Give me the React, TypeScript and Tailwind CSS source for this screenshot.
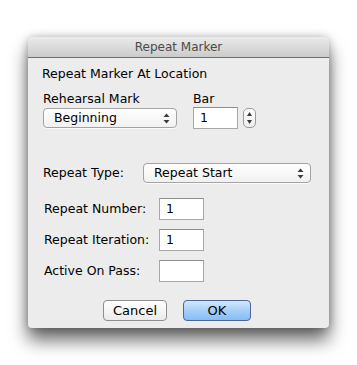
const font = "font-['DejaVu_Sans','Liberation_Sans',Arial,sans-serif]";

function Arrows() {
  return (
    <svg width="7" height="11" viewBox="0 0 7 11" className="shrink-0">
      <path d="M3.5 0.5 L6.5 4 L0.5 4 Z" fill="#3a3a3a" />
      <path d="M3.5 10.5 L6.5 7 L0.5 7 Z" fill="#3a3a3a" />
    </svg>
  );
}

function Popup({ label, width }: { label: string; width: string }) {
  return (
    <div
      className={`${width} h-[20px] flex items-center justify-between pl-[10px] pr-[6px] rounded-[4px] border border-[#a3a3a3] bg-gradient-to-b from-white to-[#f1f1f1] shadow-[0_1px_0_rgba(255,255,255,0.8)] text-[12.5px] text-black`}
    >
      <span>{label}</span>
      <Arrows />
    </div>
  );
}

function Field({ value }: { value: string }) {
  return (
    <div className="w-[45px] h-[22px] bg-white border border-[#a8a8a8] border-t-[#8c8c8c] flex items-center pl-[6px] text-[12.5px] text-black">
      {value}
    </div>
  );
}

function Stepper() {
  return (
    <div className="w-[13px] h-[20px] rounded-[5px] border border-[#9a9a9a] bg-gradient-to-b from-white to-[#ededed] flex flex-col items-center justify-between py-[3px]">
      <svg width="5" height="4" viewBox="0 0 5 4">
        <path d="M2.5 0 L5 4 L0 4 Z" fill="#3a3a3a" />
      </svg>
      <svg width="5" height="4" viewBox="0 0 5 4">
        <path d="M2.5 4 L5 0 L0 0 Z" fill="#3a3a3a" />
      </svg>
    </div>
  );
}

function LabeledField({ label, value, mt }: { label: string; value: string; mt: string }) {
  return (
    <div className={`${mt} flex items-center`}>
      <span className="w-[117px] pl-[2px] text-[12.5px] text-black">{label}</span>
      <Field value={value} />
    </div>
  );
}

export default function App() {
  return (
    <div className={`w-[357px] h-[365px] bg-white pt-[37px] pl-[28px] ${font}`}>
      <div className="w-[301px] h-[291px] flex flex-col rounded-t-[5px] rounded-b-[4px] bg-[#ececec] shadow-[0_12px_18px_rgba(0,0,0,0.6),0_0_8px_rgba(0,0,0,0.25)] overflow-hidden">
        <div className="h-[21px] shrink-0 flex items-center justify-center bg-gradient-to-b from-[#ebebeb] to-[#cbcbcb] border-b border-[#6f6f6f] text-[12px] text-[#4a4a4a]">
          Repeat Marker
        </div>
        <div className="flex flex-col pl-[14px]">
          <div className="mt-[8px] h-[16px] text-[12.5px] text-black leading-[16px]">
            Repeat Marker At Location
          </div>
          <div className="mt-[9px] h-[16px] flex text-[12.5px] text-black leading-[16px]">
            <span className="w-[151px] pl-[1px]">Rehearsal Mark</span>
            <span>Bar</span>
          </div>
          <div className="flex items-start h-[22px]">
            <div className="ml-[1px] mt-[1px]">
              <Popup label="Beginning" width="w-[134px]" />
            </div>
            <div className="ml-[16px]">
              <Field value="1" />
            </div>
            <div className="ml-[5px] mt-[1px]">
              <Stepper />
            </div>
          </div>
          <div className="mt-[34px] flex items-center h-[20px]">
            <span className="w-[101px] pl-[1px] text-[12.5px] text-black">Repeat Type:</span>
            <Popup label="Repeat Start" width="w-[168px]" />
          </div>
          <LabeledField label="Repeat Number:" value="1" mt="mt-[15px]" />
          <LabeledField label="Repeat Iteration:" value="1" mt="mt-[9px]" />
          <LabeledField label="Active On Pass:" value="" mt="mt-[9px]" />
          <div className="mt-[18px] flex ml-[61px] gap-[16px]">
            <button className="w-[64px] h-[21px] rounded-[4px] border border-[#8e8e8e] bg-gradient-to-b from-white to-[#ebebeb] text-[13px] text-black leading-none">
              Cancel
            </button>
            <button className="w-[68px] h-[21px] rounded-[4px] border border-[#4f6593] bg-gradient-to-b from-[#d2e7fd] via-[#a6cff8] to-[#84bdf6] text-[13px] text-black leading-none">
              OK
            </button>
          </div>
        </div>
      </div>
    </div>
  );
}
